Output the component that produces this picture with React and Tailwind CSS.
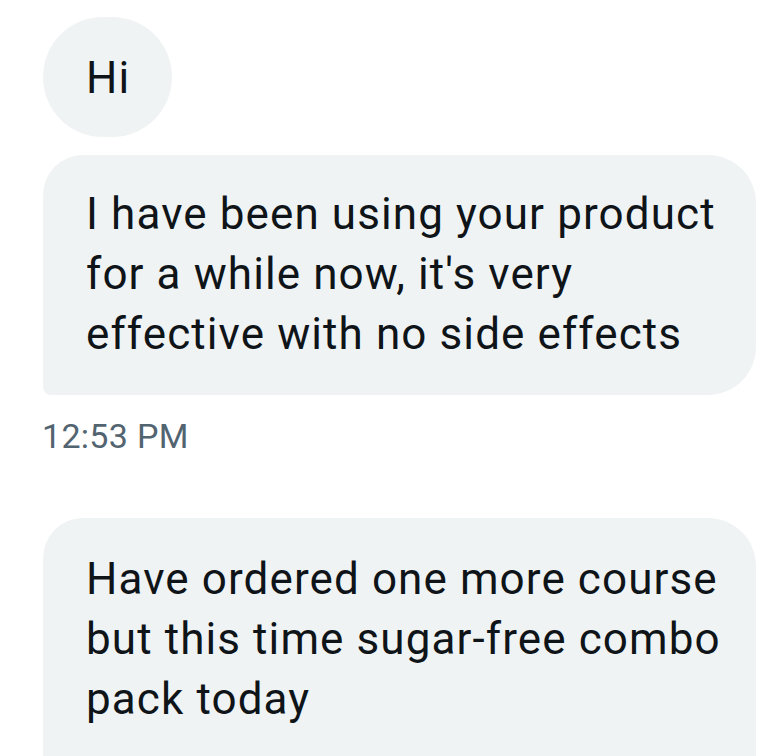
export default function App() {
  const font = { fontFamily: "Roboto, 'Noto Sans', sans-serif" };
  return (
    <div className="w-[776px] h-[756px] overflow-hidden bg-white" style={font}>
      <div className="flex flex-col items-start pl-[43px] pt-[17px]">
        <div className="bg-[#eff3f4] rounded-full pl-[43px] pr-[42px] pt-[31px] pb-[29px] text-[44px] leading-[60px] tracking-[1px] text-[#0f1419]">
          Hi
        </div>
        <div className="mt-[18px] w-[713px] bg-[#eff3f4] rounded-tl-[40px] rounded-tr-[48px] rounded-br-[48px] rounded-bl-[8px] pl-[43px] pt-[29px] pb-[31px] text-[44px] leading-[60px] tracking-[1.1px] text-[#0f1419] whitespace-nowrap">
          <div>I have been using your product</div>
          <div>for a while now, it's very</div>
          <div>effective with no side effects</div>
        </div>
        <div className="mt-[21px] text-[34px] leading-[40px] tracking-[0.3px] text-[#536471] ml-[-1px]">12:53 PM</div>
        <div className="mt-[62px] w-[713px] h-[260px] bg-[#eff3f4] rounded-tl-[40px] rounded-tr-[48px] pl-[43px] pt-[31px] text-[44px] leading-[60px] tracking-[1.1px] text-[#0f1419] whitespace-nowrap">
          <div>Have ordered one more course</div>
          <div>but this time sugar-free combo</div>
          <div>pack today</div>
        </div>
      </div>
    </div>
  );
}
